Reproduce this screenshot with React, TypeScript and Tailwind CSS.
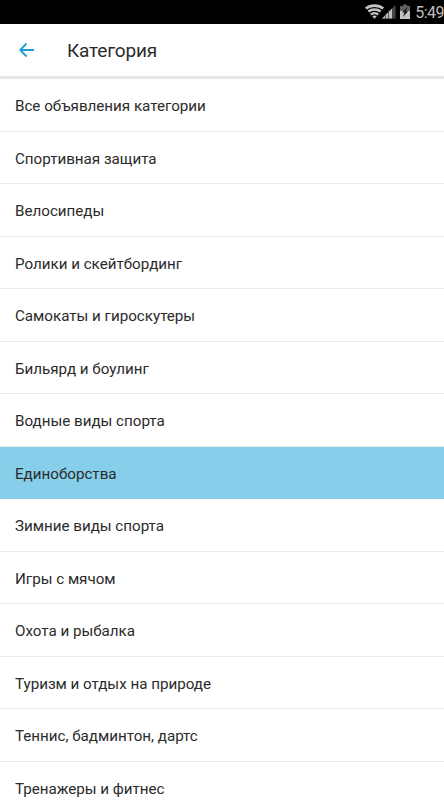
const items = [
  'Все объявления категории',
  'Спортивная защита',
  'Велосипеды',
  'Ролики и скейтбординг',
  'Самокаты и гироскутеры',
  'Бильярд и боулинг',
  'Водные виды спорта',
  'Единоборства',
  'Зимние виды спорта',
  'Игры с мячом',
  'Охота и рыбалка',
  'Туризм и отдых на природе',
  'Теннис, бадминтон, дартс',
  'Тренажеры и фитнес',
];

export default function App() {
  return (
    <div className="flex h-[800px] w-[444px] flex-col overflow-hidden bg-white font-['Roboto',sans-serif] text-[#2b2b2b]">
      <div className="flex h-6 shrink-0 items-center justify-end bg-black text-[#bebebe]">
        <svg width="46" height="24" viewBox="0 0 46 24" className="mr-[4px]">
          <g fill="none" stroke="#c4c4c4" strokeWidth="2.6">
            <path d="M.8 8.5C5.5 4.6 13.5 4.6 18.2 8.5" />
            <path d="M3.4 11.6C6.6 8.8 12.4 8.8 15.6 11.6" />
            <path d="M5.9 14.6C7.9 12.8 11.1 12.8 13.1 14.6" />
          </g>
          <path d="M7.3 16.2Q9.5 14.8 11.7 16.2L9.5 18.8Z" fill="#c4c4c4" />
          <path d="M30.5 5V18.5H17Z" fill="#474747" />
          <path d="M27 8.5V18.5H17Z" fill="#bdbdbd" />
          <path d="M20.5 13V19M23.5 10V19" stroke="#333" strokeWidth=".7" />
          <path d="M38 4.5h4V6H45v5H35V6h3Z" fill="#606060" />
          <path d="M35 11H45v8H35Z" fill="#c4c4c4" />
          <path d="M42.5 7L37 12.6H39.6L37.8 17L43.2 11.3H40.6Z" fill="#111" />
        </svg>
        <span className="pt-px text-[16px] tracking-[-0.5px]">5:49</span>
      </div>
      <header className="flex h-[55px] shrink-0 items-center border-b-[3px] border-[#e5e5e5] pl-[19px]">
        <svg width="16" height="16" viewBox="0 0 16 16" fill="none" stroke="#1a9fd0" strokeWidth="1.8">
          <path d="M15 8H1.5M7.5 1.5L1.2 8L7.5 14.5" />
        </svg>
        <h1 className="ml-8 pt-[3px] text-[19px] tracking-[-0.18px]">Категория</h1>
      </header>
      <ul>
        {items.map((item) => (
          <li
            key={item}
            className={`flex h-[52.5px] items-center border-b pl-[15px] pt-[4px] text-[15.2px] tracking-[-0.02px] ${item === 'Единоборства' ? 'border-[#87ceeb] bg-[#87ceeb]' : 'border-[#ebebeb]'}`}
          >
            {item}
          </li>
        ))}
      </ul>
    </div>
  );
}
